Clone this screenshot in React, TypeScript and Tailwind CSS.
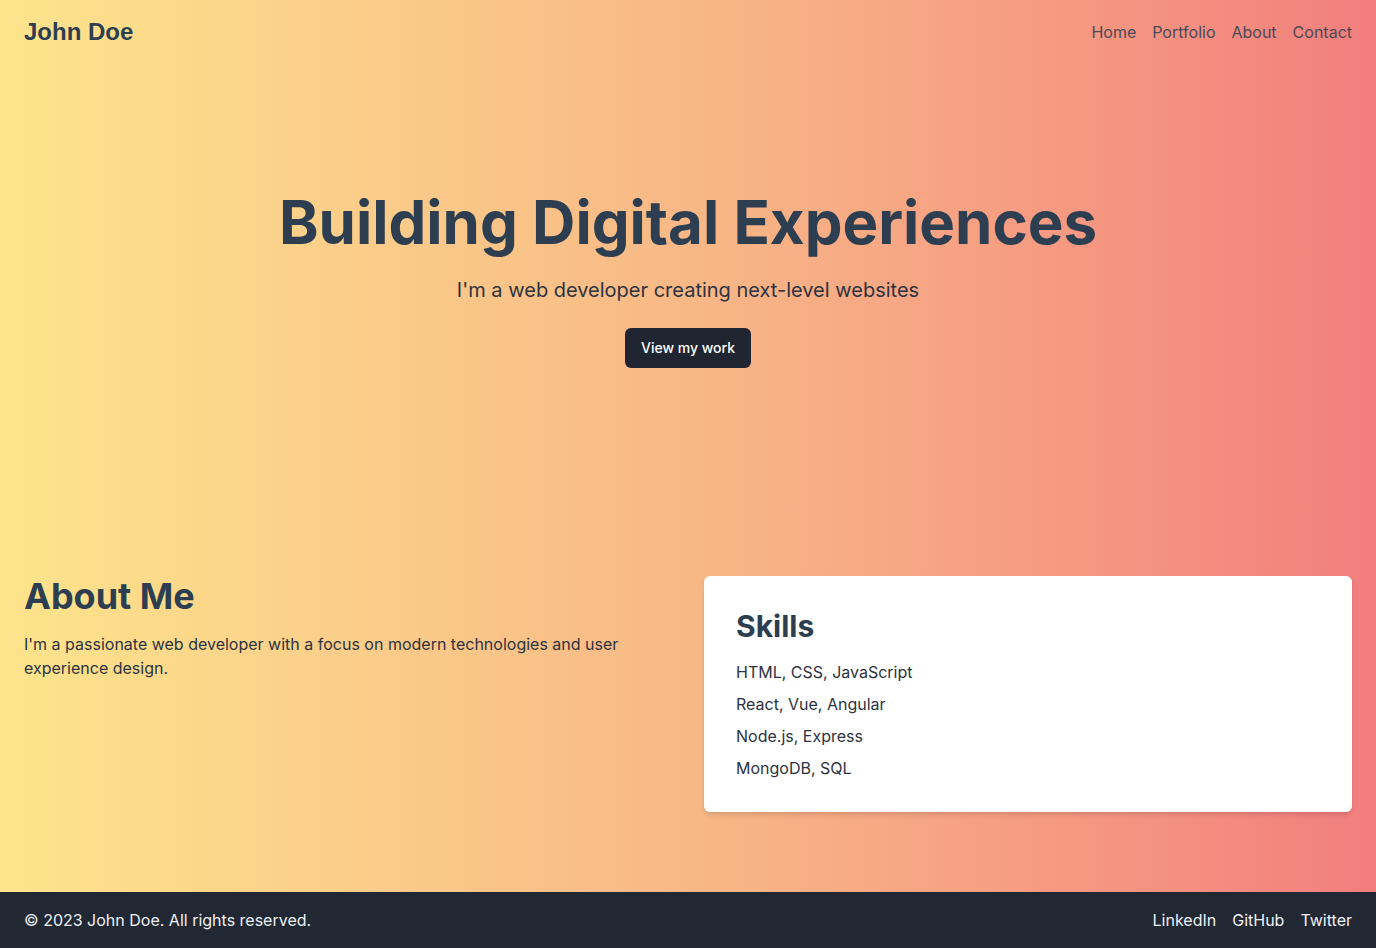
const SKILLS = ['HTML, CSS, JavaScript', 'React, Vue, Angular', 'Node.js, Express', 'MongoDB, SQL'];

const NAV = ['Home', 'Portfolio', 'About', 'Contact'];

const SOCIAL = ['LinkedIn', 'GitHub', 'Twitter'];

export default function App() {
  return (
    <div
      className="min-h-screen flex flex-col bg-gradient-to-r from-[#fde48c] via-[#f8b886] to-[#f27e7e]"
      style={{ fontFamily: 'Inter, "Noto Sans", sans-serif' }}
    >
      <header className="h-16 px-6 flex items-center justify-between">
        <span
          className="text-2xl font-bold text-[#2c3e50]"
          style={{ fontFamily: '"Liberation Sans", Arial, sans-serif' }}
        >
          John Doe
        </span>
        <nav className="flex gap-4 text-base text-[#4a4a55]">
          {NAV.map((n) => (
            <a key={n} href="#">
              {n}
            </a>
          ))}
        </nav>
      </header>

      <section className="pt-32 pb-[208px] flex flex-col items-center text-center">
        <h1 className="text-6xl leading-[60px] font-bold text-[#2c3e50] mb-6">Building Digital Experiences</h1>
        <p className="text-xl leading-7 text-[#2d3340] mb-6">I'm a web developer creating next-level websites</p>
        <button className="bg-[#1f2631] text-white text-sm font-medium px-4 py-2.5 rounded-md">View my work</button>
      </section>

      <section className="px-6 pb-20 grid grid-cols-2 gap-8 flex-1">
        <div>
          <h2 className="text-4xl leading-10 font-bold text-[#2c3e50] mb-4">About Me</h2>
          <p className="text-base leading-6 text-[#2d3340]">
            I'm a passionate web developer with a focus on modern technologies and user experience design.
          </p>
        </div>
        <div className="bg-white rounded-md shadow-md p-8">
          <h3 className="text-3xl leading-9 font-bold text-[#2c3e50] mb-4">Skills</h3>
          <ul className="text-base leading-6 text-[#2d3340]">
            {SKILLS.map((s, i) => (
              <li key={s} className={i < SKILLS.length - 1 ? 'mb-2' : ''}>
                {s}
              </li>
            ))}
          </ul>
        </div>
      </section>

      <footer className="h-14 px-6 bg-[#212733] text-[#eef0f3] flex items-center justify-between text-base">
        <p>© 2023 John Doe. All rights reserved.</p>
        <div className="flex gap-4">
          {SOCIAL.map((s) => (
            <a key={s} href="#">
              {s}
            </a>
          ))}
        </div>
      </footer>
    </div>
  );
}
